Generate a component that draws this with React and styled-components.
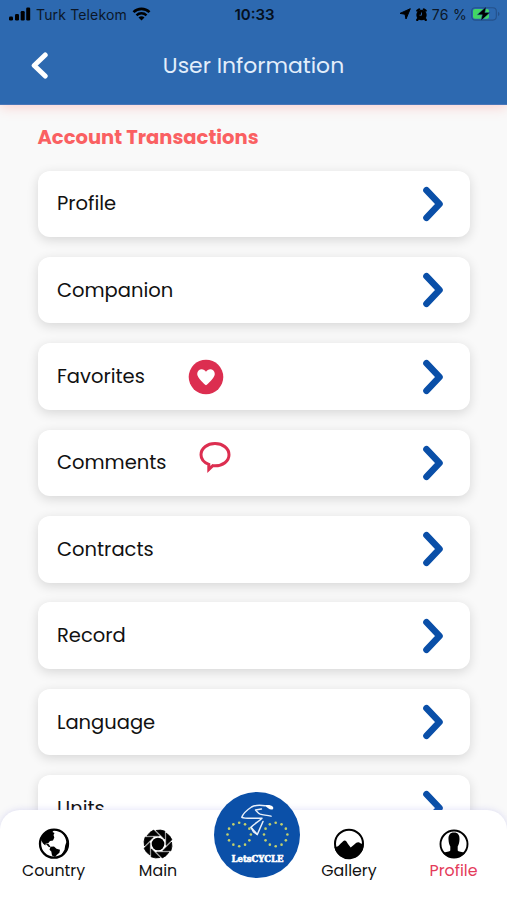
import React from "react";
import styled, { createGlobalStyle } from "styled-components";

const GlobalStyle = createGlobalStyle`
  * {
    box-sizing: border-box;
  }
  body {
    margin: 0;
    font-family: Poppins, Inter, sans-serif;
  }
`;

const Screen = styled.div`
  width: 507px;
  height: 900px;
  display: flex;
  flex-direction: column;
  overflow: hidden;
  background: #f9f9f9;
`;

const Header = styled.header`
  height: 105px;
  flex: none;
  z-index: 1;
  background: #2d69b0;
  border-bottom: 1px solid #4a76b8;
  box-shadow: 0 2px 12px rgba(255, 90, 80, 0.26);
`;

const StatusBar = styled.div`
  height: 28px;
  display: grid;
  grid-template-columns: 1fr auto 1fr;
  align-items: center;
  padding: 0 7px 0 9px;
  color: #0b1728;
  font-family: Inter, sans-serif;
  font-size: 14px;
`;

const StatusGroup = styled.div`
  display: flex;
  align-items: center;
  justify-content: ${(props) => (props.$end ? "flex-end" : "flex-start")};
  gap: ${(props) => props.$gap}px;
`;

const StatusText = styled.span`
  letter-spacing: ${(props) => props.$spacing || 0}px;
  white-space: nowrap;
`;

const Clock = styled.span`
  font-weight: 600;
  font-size: 15px;
  color: #051020;
`;

const TitleBar = styled.div`
  height: 75px;
  display: grid;
  grid-template-columns: 60px 1fr 60px;
  align-items: center;
`;

const BackButton = styled.button`
  border: none;
  background: none;
  padding: 0 0 0 29px;
  display: flex;
`;

const Title = styled.h1`
  margin: 0;
  text-align: center;
  font-size: 21.9px;
  font-weight: 400;
  line-height: 30px;
  color: #e3eefb;
`;

const Content = styled.main`
  flex: 1;
  min-height: 0;
  overflow: hidden;
  padding: 17.5px 37px 0 37.5px;
`;

const SectionTitle = styled.h2`
  margin: 0 0 18px;
  font-size: 19.5px;
  line-height: 30px;
  font-weight: 700;
  color: #fa6062;
`;

const List = styled.div`
  display: flex;
  flex-direction: column;
  gap: 19.9px;
`;

const Row = styled.div`
  height: 66.5px;
  flex: none;
  display: flex;
  align-items: center;
  padding: 0 25.5px 0 19.5px;
  border-radius: 12px;
  background: #fff;
  box-shadow: 0 3px 12px rgba(0, 0, 0, 0.14);
`;

const RowLabel = styled.span`
  font-size: 19.5px;
  color: #111;
`;

const RowIcon = styled.span`
  display: flex;
  margin-left: ${(props) => props.$gap}px;
  padding-bottom: ${(props) => props.$lift || 0}px;
`;

const Arrow = styled.svg`
  margin-left: auto;
`;

const TabBar = styled.nav`
  height: 90px;
  margin-top: -20px;
  flex: none;
  z-index: 1;
  display: flex;
  border-radius: 20px 20px 0 0;
  background: #fff;
  box-shadow: 0 0 7px rgba(120, 120, 220, 0.24);
`;

const Tab = styled.div`
  width: ${(props) => props.$width}px;
  display: flex;
  flex-direction: column;
  align-items: center;
  padding-top: 18px;
  color: ${(props) => (props.$active ? "#e43b5a" : "#111")};

  &:last-child {
    margin-left: auto;
  }
`;

const TabLabel = styled.span`
  font-size: 15.8px;
  line-height: 22px;
  white-space: nowrap;
`;

const LogoButton = styled.div`
  width: 96px;
  display: flex;
  justify-content: center;
  margin-top: -18px;
`;

const SignalIcon = () => (
  <svg width="22" height="14" viewBox="0 0 22 14" fill="#000">
    <rect x="0" y="9.5" width="4" height="4" rx="1.2" />
    <rect x="6" y="7" width="4" height="6.5" rx="1.2" />
    <rect x="11.7" y="4" width="4" height="9.5" rx="1.2" />
    <rect x="17.2" y="0.5" width="4" height="13" rx="1.2" />
  </svg>
);

const WifiIcon = () => (
  <svg width="19" height="14" viewBox="0 0 18 14" fill="none" stroke="#000">
    <path d="M1 5.2a11.3 11.3 0 0 1 16 0" strokeWidth="2.6" />
    <path d="M4 8.4a7 7 0 0 1 10 0" strokeWidth="2.4" />
    <path d="M9 13.6 6 10.5a4.2 4.2 0 0 1 6 0z" fill="#000" stroke="none" />
  </svg>
);

const LocationIcon = () => (
  <svg width="12" height="12" viewBox="0 0 12 12">
    <path d="M11.3.7 7 11 6 6.200 1 5.400z" fill="#000" stroke="#000" strokeLinejoin="round" />
  </svg>
);

const AlarmIcon = () => (
  <svg width="13" height="13" viewBox="0 0 12 13">
    <circle cx="6" cy="7" r="5.2" fill="#000" />
    <path d="M1.8 2.7 3.700 1.400M10.200 2.700 8.300 1.400M2.400 11 1.700 12M9.600 11l.7 1" stroke="#000" strokeWidth="2.2" strokeLinecap="round" />
    <path d="M6 4.500v2.700H4" fill="none" stroke="#2d69b0" strokeWidth="0.9" />
  </svg>
);

const BatteryIcon = () => (
  <svg width="29" height="14" viewBox="0 0 29 14">
    <rect x="0.7" y="0.7" width="24.6" height="12.4" rx="3.5" fill="none" stroke="#24518a" strokeWidth="1.1" />
    <path d="M27 4.7c2 1 2 3.4 0 4.4z" fill="#24518a" />
    <rect x="2" y="2" width="16" height="9.8" rx="2" fill="#42d765" />
    <path d="M15.300-.5 6.200 7.800h5.100l-1.500 6 9.300-8.200h-5.200z" fill="#000" stroke="#2d69b0" strokeWidth="0.5" />
  </svg>
);

const BackIcon = () => (
  <svg width="20" height="28" viewBox="0 0 20 28">
    <path d="M16.2 3 5.200 13.500l11 10.500" fill="none" stroke="#fff" strokeWidth="5" strokeLinecap="round" strokeLinejoin="round" />
  </svg>
);

const ArrowIcon = () => (
  <Arrow width="24" height="36" viewBox="0 0 24 36">
    <path d="M5.500 4.200 18.500 18 5.500 31.800" fill="none" stroke="#0a4fa8" strokeWidth="6.600" strokeLinecap="round" strokeLinejoin="round" />
  </Arrow>
);

const HeartIcon = () => (
  <svg width="36" height="36" viewBox="0 0 36 36">
    <circle cx="18" cy="18" r="17.3" fill="#dc2e50" />
    <path d="M18 26.3c-1.4-1.2-8.800-7.300-8.800-11.400 0-5.300 6.500-6.300 8.800-2.200 2.300-4.100 8.800-3.100 8.800 2.200 0 4.100-7.400 10.200-8.800 11.400z" fill="#fff" />
  </svg>
);

const CommentIcon = () => (
  <svg width="32" height="32" viewBox="0 0 32 32">
    <path
      d="M9.800 23.300C4.800 21.500 2 18 2 13.800 2 7.300 8.200 2.600 16 2.600s14 4.700 14 11.200-6.200 11-14 11c-1 0-1.600 0-2.200-.2l-4 3.800z"
      fill="none"
      stroke="#dc2e50"
      strokeWidth="3"
    />
  </svg>
);

const GlobeIcon = () => (
  <svg width="32" height="32" viewBox="0 0 32 32">
    <circle cx="16" cy="15.700" r="14" fill="#fff" stroke="#000" strokeWidth="2.300" />
    <path d="M4.500 8 8 4l5-2.500 3 .5-1.500 2 2 1-1 2 .8 2.500-1.300 3-3 .5-1.800 2.200-2.400.3-.5 2L5 15.500 3 12z" />
    <path d="m7.500 15.500 3 .5 2 2.800-1.500.4z" />
    <path d="m12.500 18.800 3.500-.3 2.500 2.200 3.500 1-.6 3-2.400 2-2 2.300-3-1.500-.7-4-1.800-1.700z" />
    <path d="M24 3.500c4.700 3 7 7.800 6.300 13.200-.7 4.300-3.200 8-6.800 10l3-5 .7-4.200 1.200-3.500-1-4z" />
  </svg>
);

const blades = [0, 45, 90, 135, 180, 225, 270, 315];

const ShutterIcon = () => (
  <svg width="32" height="32" viewBox="-16 -16 32 32">
    <circle r="6.3" />
    {blades.map((angle) => (
      <path
        key={angle}
        d="M-10.900-8.200A14 14 0 0 1-4.300-13.900L1.300-8.200z"
        stroke="#000"
        strokeWidth="0.8"
        strokeLinejoin="round"
        transform={`rotate(${angle})`}
      />
    ))}
  </svg>
);

const GalleryIcon = () => (
  <svg width="32" height="32" viewBox="0 0 32 32">
    <circle cx="16" cy="15.700" r="14" fill="#fff" stroke="#000" strokeWidth="2" />
    <path d="M1.500 19c3 .3 4.500-1.500 6.200-3.500 1.700-1.500 2.800-3 4-3 1.300 0 2.300 1.700 3.300 3.500l2.700 3.500 3.600-3c1.700-1.500 2.700-2.300 4-2.200 1.400.2 2.500 1.700 5.200 1.900A14.600 14.600 0 0 1 1.500 19z" />
  </svg>
);

const PersonIcon = () => (
  <svg width="32" height="32" viewBox="0 0 32 32">
    <circle cx="16" cy="16" r="13.500" fill="#fff" stroke="#000" strokeWidth="1.900" />
    <path d="M16 4.500c-4.200 0-5.700 2.700-5.500 7 .1 3.300 1 5.600 1.800 7v3.700c0 1.500-5 1.500-7.300 2.900C7.700 28 11.500 30 16 30s8.300-2 11-4.900c-2.300-1.400-7.300-1.400-7.300-2.900v-3.700c.8-1.400 1.700-3.700 1.800-7 .2-4.300-1.300-7-5.500-7z" />
  </svg>
);

const stars = Array.from({ length: 12 }, (_, i) => (i * Math.PI) / 6);

const Wheel = ({ cx }) =>
  stars.map((angle) => (
    <circle key={angle} cx={cx + 11.7 * Math.cos(angle)} cy={42.5 + 11.7 * Math.sin(angle)} r="1.3" fill="#c3d06c" />
  ));

const LogoText = styled.text`
  font-family: "DejaVu Serif", serif;
  font-weight: 700;
  font-size: 10px;
  fill: #fff;
  stroke: #fff;
  stroke-width: 0.6px;
`;

const Logo = () => (
  <svg width="86" height="86" viewBox="0 0 86 86">
    <circle cx="43" cy="43" r="43" fill="#0b50a8" />
    <Wheel cx={25.2} />
    <Wheel cx={61.7} />
    <g fill="none" stroke="#e8f0fa" strokeLinecap="round" strokeLinejoin="round">
      <path d="M51 13.800c-5-.8-10-.6-13.500 1.200-4.500 3-8.500 6.800-9.700 10.300 3 1.600 11 .6 20.200 1-3.500 3.500-8 5.700-11 9l6.300 7.200L49 29.500" strokeWidth="1.500" />
      <path d="M41.500 18c1.500 1.500 3 3.500 4.700 4.200 3 .9 7 .9 10.800 2M41.500 18l6-1M37 35.500l2.500 4.500 3.800 2.500" strokeWidth="1.400" />
    </g>
    <path d="M50.500 13.500c3-1 7-.5 8.500 1.500.8 1.500 0 2.700-1.500 2.600-2.500-.2-4-2-7-4.100z" fill="#fff" />
    <LogoText x="17.500" y="69.600" textLength="52" lengthAdjust="spacingAndGlyphs">
      LetsCYCLE
    </LogoText>
  </svg>
);

const rows = [
  { label: "Profile" },
  { label: "Companion" },
  { label: "Favorites", icon: <HeartIcon />, gap: 43.5 },
  { label: "Comments", icon: <CommentIcon />, gap: 32, lift: 12 },
  { label: "Contracts" },
  { label: "Record" },
  { label: "Language" },
  { label: "Units" },
];

function App() {
  return (
    <>
      <GlobalStyle />
      <Screen>
        <Header>
          <StatusBar>
            <StatusGroup $gap={5}>
              <SignalIcon />
              <StatusText $spacing={0.15}>Turk Telekom</StatusText>
              <WifiIcon />
            </StatusGroup>
            <Clock>10:33</Clock>
            <StatusGroup $gap={4} $end>
              <LocationIcon />
              <AlarmIcon />
              <StatusText $spacing={0.3}>76 %</StatusText>
              <BatteryIcon />
            </StatusGroup>
          </StatusBar>
          <TitleBar>
            <BackButton aria-label="Back">
              <BackIcon />
            </BackButton>
            <Title>User Information</Title>
          </TitleBar>
        </Header>
        <Content>
          <SectionTitle>Account Transactions</SectionTitle>
          <List>
            {rows.map((row) => (
              <Row key={row.label}>
                <RowLabel>{row.label}</RowLabel>
                {row.icon && (
                  <RowIcon $gap={row.gap} $lift={row.lift}>
                    {row.icon}
                  </RowIcon>
                )}
                <ArrowIcon />
              </Row>
            ))}
          </List>
        </Content>
        <TabBar>
          <Tab $width={107}>
            <GlobeIcon />
            <TabLabel>Country</TabLabel>
          </Tab>
          <Tab $width={102}>
            <ShutterIcon />
            <TabLabel>Main</TabLabel>
          </Tab>
          <LogoButton>
            <Logo />
          </LogoButton>
          <Tab $width={88}>
            <GalleryIcon />
            <TabLabel>Gallery</TabLabel>
          </Tab>
          <Tab $width={107} $active>
            <PersonIcon />
            <TabLabel>Profile</TabLabel>
          </Tab>
        </TabBar>
      </Screen>
    </>
  );
}

export default App;
